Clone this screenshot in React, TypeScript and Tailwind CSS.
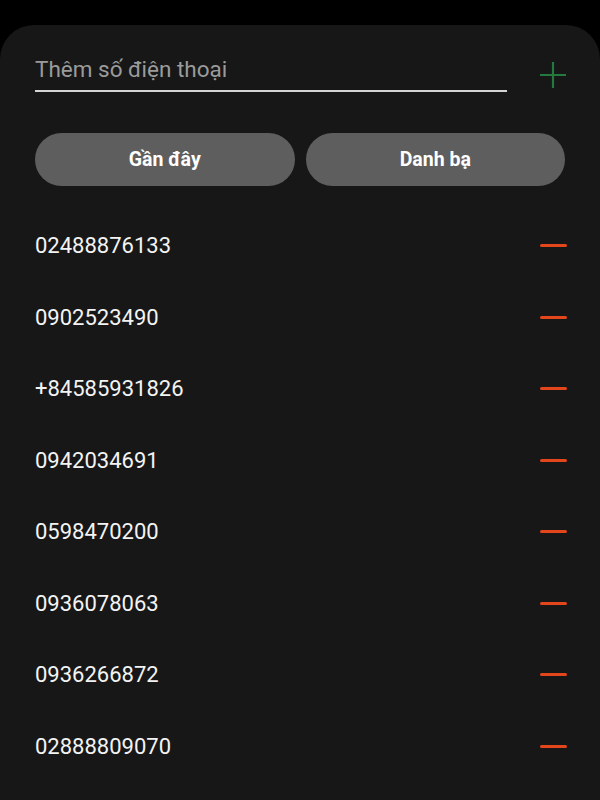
import React from 'react';

const numbers = [
  '02488876133',
  '0902523490',
  '+84585931826',
  '0942034691',
  '0598470200',
  '0936078063',
  '0936266872',
  '02888809070',
];

const App = () => {
  return (
    <div
      className="min-h-screen bg-black flex flex-col pt-[25px]"
      style={{ fontFamily: 'Roboto, "Noto Sans", sans-serif' }}
    >
      <div className="flex-1 bg-[#171717] rounded-t-[34px] px-[35px] pt-[29px]">
        {/* Add number */}
        <div className="flex items-center">
          <div className="flex-1 border-b-2 border-[#d4d4d4] pb-[6px]">
            <span className="block text-[22.5px] leading-[30px] text-[#9b9b9b]">Thêm số điện thoại</span>
          </div>
          <div className="w-[60px] flex justify-end -mr-[2px] mt-[4px]">
            <svg width="28" height="28" viewBox="0 0 28 28">
              <path d="M14 1v26M1 14h26" stroke="#23793e" strokeWidth="2.2" />
            </svg>
          </div>
        </div>

        {/* Tabs */}
        <div className="flex gap-[11px] mt-[41px]">
          <button className="flex-1 h-[53px] rounded-full bg-[#5e5e5e] text-white text-[19.5px] font-bold">
            Gần đây
          </button>
          <button className="flex-1 h-[53px] rounded-full bg-[#5e5e5e] text-white text-[19.5px] font-bold">
            Danh bạ
          </button>
        </div>

        {/* Numbers */}
        <div className="mt-[24px]">
          {numbers.map((n) => (
            <div key={n} className="h-[71.5px] flex items-center justify-between">
              <span className="text-[22px] text-[#f3f3f3]">{n}</span>
              <div className="w-[27px] h-[3px] rounded-full bg-[#e4461c] mr-[-2px]" />
            </div>
          ))}
        </div>
      </div>
    </div>
  );
};

export default App;
